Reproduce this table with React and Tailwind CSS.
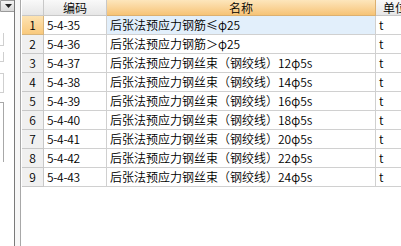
import React from "react";

const rows = [
  ["1", "5-4-35", "后张法预应力钢筋≤φ25"],
  ["2", "5-4-36", "后张法预应力钢筋＞φ25"],
  ["3", "5-4-37", "后张法预应力钢丝束（钢绞线）12φ5s"],
  ["4", "5-4-38", "后张法预应力钢丝束（钢绞线）14φ5s"],
  ["5", "5-4-39", "后张法预应力钢丝束（钢绞线）16φ5s"],
  ["6", "5-4-40", "后张法预应力钢丝束（钢绞线）18φ5s"],
  ["7", "5-4-41", "后张法预应力钢丝束（钢绞线）20φ5s"],
  ["8", "5-4-42", "后张法预应力钢丝束（钢绞线）22φ5s"],
  ["9", "5-4-43", "后张法预应力钢丝束（钢绞线）24φ5s"],
];

const font = { fontFamily: '"Noto Sans CJK SC", "Liberation Sans", sans-serif' };

export default function App() {
  return (
    <div className="flex w-[401px] h-[246px] bg-white overflow-hidden text-[12px] font-[350] text-black" style={font}>
      {/* left panel */}
      <div className="w-[14px] flex flex-col shrink-0">
        <div className="w-[16px] h-[12px] bg-gradient-to-b from-[#f4f4f4] to-[#d9d9d9] border border-[#9a9a9a] rounded-br-[2px] flex items-center justify-center shrink-0">
          <svg width="7" height="4" viewBox="0 0 7 4"><path d="M0 0h7L3.5 4z" fill="#222" /></svg>
        </div>
        <div className="mt-[21px] w-[4px] h-[13px] border-r border-b border-[#cfcfcf] bg-white" />
        <div className="mt-[6px] w-[4px] h-[10px] border-r border-b border-[#cfcfcf]" />
        <div className="mt-[11px] w-[4px] h-[20px] border-r border-t border-b border-[#cfcfcf]" />
        <div className="mt-[9px] w-[4px] h-[60px] border-r border-t border-[#a8a8a8]" />
      </div>
      <div className="w-[1px] bg-[#7a7a7a] shrink-0" />
      <div className="w-[5px] bg-[#f7f7f7] shrink-0" />
      <div className="w-[1px] bg-[#a8a8a8] shrink-0" />
      <div className="w-[1px] bg-white shrink-0" />
      {/* grid */}
      <div className="flex-1 flex flex-col">
        <div className="flex h-[16px] leading-[15px]">
          <div className="w-[22px] shrink-0 bg-gradient-to-b from-[#f9f9f9] to-[#e6e6e6] border-r border-b border-[#c8c8c8]" />
          <div className="w-[63px] shrink-0 bg-gradient-to-b from-[#f9f9f9] to-[#e6e6e6] border-r border-b border-[#c8c8c8] text-center">编码</div>
          <div className="w-[269px] shrink-0 bg-gradient-to-b from-[#fde6bc] to-[#f6c375] border-r border-b border-[#dcb070] text-center">名称</div>
          <div className="flex-1 bg-gradient-to-b from-[#f9f9f9] to-[#e6e6e6] border-b border-[#c8c8c8] pl-[7px] whitespace-nowrap overflow-hidden">单位</div>
        </div>
        {rows.map(([n, code, name], i) => (
          <div key={n} className="flex h-[19px] leading-[18px]">
            <div
              className={
                "w-[22px] shrink-0 border-r border-b text-center " +
                (i === 0
                  ? "bg-gradient-to-b from-[#fde3b2] to-[#f9c97c] border-[#d8b47a]"
                  : "bg-[#f0f0f0] border-[#c8c8c8]")
              }
            >
              {n}
            </div>
            <div className="w-[63px] shrink-0 border-r border-b border-[#d0d0d0] pl-[3px] tracking-[-0.3px]">{code}</div>
            <div
              className={
                "w-[269px] shrink-0 border-r border-b border-[#d0d0d0] pl-[3px] whitespace-nowrap overflow-hidden " +
                (i === 0 ? "bg-[#e2effb]" : "")
              }
            >
              {name}
            </div>
            <div className="flex-1 border-b border-[#d0d0d0] pl-[3px]">t</div>
          </div>
        ))}
      </div>
    </div>
  );
}
